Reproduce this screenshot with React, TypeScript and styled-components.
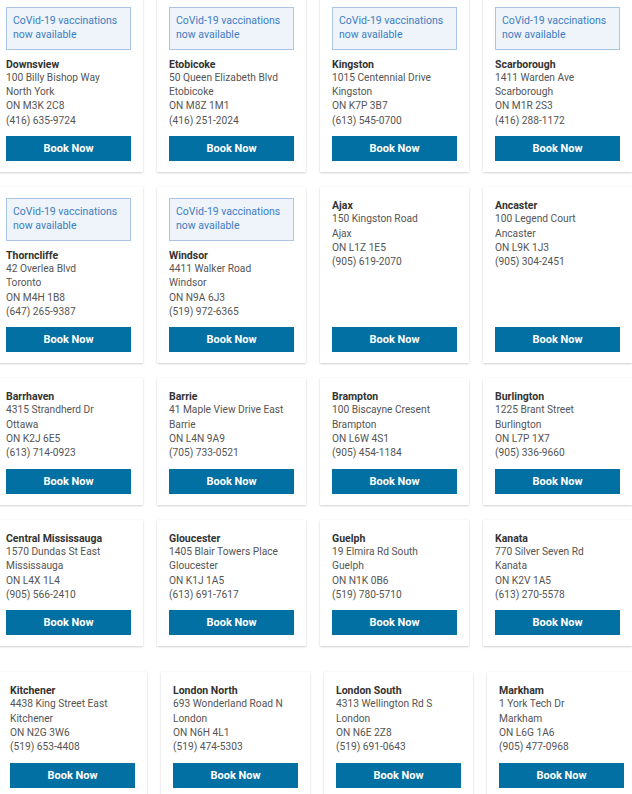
import styled, {createGlobalStyle} from "styled-components";

const GlobalStyle = createGlobalStyle`
  html, body {
    margin: 0;
    padding: 0;
    background: #fff;
    overflow: hidden;
  }
  body {
    font-family: Roboto, "Liberation Sans", sans-serif;
  }
`;

type Clinic = {
  name: string;
  street: string;
  city: string;
  postal: string;
  phone: string;
  covid?: boolean;
};

const clinics: Clinic[] = [
  {name: "Downsview", street: "100 Billy Bishop Way", city: "North York", postal: "ON M3K 2C8", phone: "(416) 635-9724", covid: true},
  {name: "Etobicoke", street: "50 Queen Elizabeth Blvd", city: "Etobicoke", postal: "ON M8Z 1M1", phone: "(416) 251-2024", covid: true},
  {name: "Kingston", street: "1015 Centennial Drive", city: "Kingston", postal: "ON K7P 3B7", phone: "(613) 545-0700", covid: true},
  {name: "Scarborough", street: "1411 Warden Ave", city: "Scarborough", postal: "ON M1R 2S3", phone: "(416) 288-1172", covid: true},
  {name: "Thorncliffe", street: "42 Overlea Blvd", city: "Toronto", postal: "ON M4H 1B8", phone: "(647) 265-9387", covid: true},
  {name: "Windsor", street: "4411 Walker Road", city: "Windsor", postal: "ON N9A 6J3", phone: "(519) 972-6365", covid: true},
  {name: "Ajax", street: "150 Kingston Road", city: "Ajax", postal: "ON L1Z 1E5", phone: "(905) 619-2070"},
  {name: "Ancaster", street: "100 Legend Court", city: "Ancaster", postal: "ON L9K 1J3", phone: "(905) 304-2451"},
  {name: "Barrhaven", street: "4315 Strandherd Dr", city: "Ottawa", postal: "ON K2J 6E5", phone: "(613) 714-0923"},
  {name: "Barrie", street: "41 Maple View Drive East", city: "Barrie", postal: "ON L4N 9A9", phone: "(705) 733-0521"},
  {name: "Brampton", street: "100 Biscayne Cresent", city: "Brampton", postal: "ON L6W 4S1", phone: "(905) 454-1184"},
  {name: "Burlington", street: "1225 Brant Street", city: "Burlington", postal: "ON L7P 1X7", phone: "(905) 336-9660"},
  {name: "Central Mississauga", street: "1570 Dundas St East", city: "Mississauga", postal: "ON L4X 1L4", phone: "(905) 566-2410"},
  {name: "Gloucester", street: "1405 Blair Towers Place", city: "Gloucester", postal: "ON K1J 1A5", phone: "(613) 691-7617"},
  {name: "Guelph", street: "19 Elmira Rd South", city: "Guelph", postal: "ON N1K 0B6", phone: "(519) 780-5710"},
  {name: "Kanata", street: "770 Silver Seven Rd", city: "Kanata", postal: "ON K2V 1A5", phone: "(613) 270-5578"},
];

const moreClinics: Clinic[] = [
  {name: "Kitchener", street: "4438 King Street East", city: "Kitchener", postal: "ON N2G 3W6", phone: "(519) 653-4408"},
  {name: "London North", street: "693 Wonderland Road N", city: "London", postal: "ON N6H 4L1", phone: "(519) 474-5303"},
  {name: "London South", street: "4313 Wellington Rd S", city: "London", postal: "ON N6E 2Z8", phone: "(519) 691-0643"},
  {name: "Markham", street: "1 York Tech Dr", city: "Markham", postal: "ON L6G 1A6", phone: "(905) 477-0968"},
];

const Page = styled.div`
  width: 632px;
  overflow: hidden;
`;

const Grid = styled.div<{$offsetX: number; $offsetY: number}>`
  display: grid;
  grid-template-columns: repeat(4, 149px);
  column-gap: 14px;
  row-gap: 15px;
  margin-left: ${(p) => p.$offsetX}px;
  margin-top: ${(p) => p.$offsetY}px;
`;

const Card = styled.div`
  display: flex;
  flex-direction: column;
  background: #fff;
  padding: 11px 12px;
  box-shadow: 0 1px 2px rgba(0, 0, 0, 0.18), 0 0 1px rgba(0, 0, 0, 0.06);
  font-size: 10.5px;
  line-height: 14.3px;
`;

const Banner = styled.div`
  background: #eef4fa;
  border: 1px solid #a9c6e6;
  color: #3d7cc2;
  padding: 6px;
  margin-bottom: 7px;
`;

const Name = styled.div`
  color: #333;
  font-weight: 700;
  padding-top: 1px;
  margin-bottom: -1px;
`;

const Line = styled.div`
  color: #555;
  font-size: 10.2px;
`;

const BookButton = styled.button`
  margin-top: auto;
  height: 25px;
  width: 100%;
  border: none;
  background: #0270a2;
  color: #fff;
  font-family: Roboto, "Liberation Sans", sans-serif;
  font-weight: 700;
  font-size: 11px;
  cursor: pointer;
`;

const Spacer = styled.div`
  height: 8px;
  flex-shrink: 0;
`;

const ClinicCard = ({clinic}: {clinic: Clinic}) => (
  <Card>
    {clinic.covid && (
      <Banner>
        CoVid-19 vaccinations
        <br />
        now available
      </Banner>
    )}
    <Name>{clinic.name}</Name>
    <Line>{clinic.street}</Line>
    <Line>{clinic.city}</Line>
    <Line>{clinic.postal}</Line>
    <Line>{clinic.phone}</Line>
    <Spacer />
    <BookButton>Book Now</BookButton>
  </Card>
);

export default function App() {
  return (
    <Page>
      <GlobalStyle />
      <Grid $offsetX={-6} $offsetY={-4}>
        {clinics.map((c) => (
          <ClinicCard key={c.name} clinic={c} />
        ))}
      </Grid>
      <Grid $offsetX={-2} $offsetY={26}>
        {moreClinics.map((c) => (
          <ClinicCard key={c.name} clinic={c} />
        ))}
      </Grid>
    </Page>
  );
}
